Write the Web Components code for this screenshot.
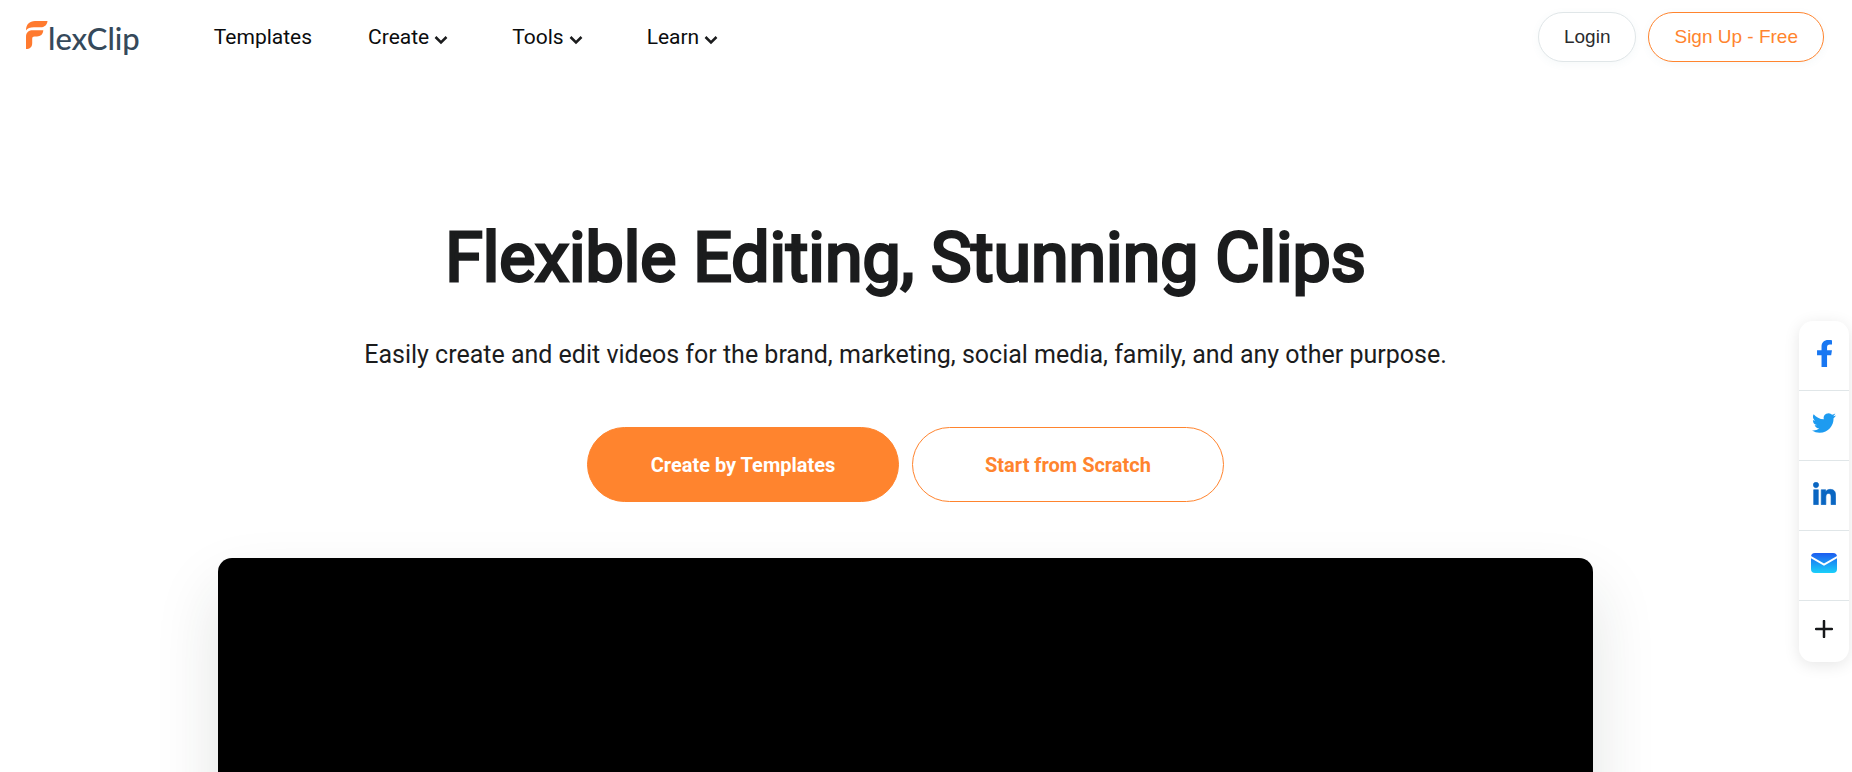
<!DOCTYPE html>
<html lang="en">
<head>
<meta charset="utf-8">
<meta name="viewport" content="width=device-width, initial-scale=1">
<title>FlexClip</title>
<style>
html { scrollbar-width: none; }
body { margin: 0; background: #fff; color: #1b1c1d; font-family: Roboto, "Liberation Sans", sans-serif; }
</style>
</head>
<body>
<flex-header></flex-header>
<flex-hero>
  <span slot="title">Flexible Editing, Stunning Clips</span>
  <span slot="lead">Easily create and edit videos for the brand, marketing, social media, family, and any other purpose.</span>
  <pill-button slot="actions" kind="primary">Create by Templates</pill-button>
  <pill-button slot="actions" kind="outline">Start from Scratch</pill-button>
</flex-hero>
<share-bar></share-bar>
<script>
const define = (name, html) => {
  const template = document.createElement('template');
  template.innerHTML = html;
  customElements.define(name, class extends HTMLElement {
    constructor() {
      super();
      this.attachShadow({ mode: 'open' }).append(template.content.cloneNode(true));
    }
  });
};

define('flex-logo', `
<style>
:host { display: block; }
a { display: flex; align-items: flex-start; text-decoration: none; color: #35495a; }
svg { display: block; width: 22px; height: 28px; margin-top: 5px; }
span { padding-top: 2px; font: 500 31px/40px Lato, sans-serif; }
</style>
<a href="#" aria-label="FlexClip home">
  <svg viewBox="0 0 22 28"><path fill="#ff7a2f" d="M0 9.500C0 3.500 3.500 0 9 0H21.500C21 4 18.500 6.300 14.500 6.300H8C4 6.300 1.500 7 0 9.500ZM0 28V16C0 11 3 9.300 7 9.300H17.300C17 13.500 14.500 15.500 11 15.500H8.500C6.800 15.500 6.200 16.300 6.200 18V22C6.200 26 4 28 0 28Z"/></svg>
  <span>lexClip</span>
</a>`);

define('nav-item', `
<style>
:host { display: block; }
:host([menu]) { padding-right: 8px; }
a, button { display: flex; align-items: center; gap: 5px; padding: 0; border: 0; background: none; color: #0b0c0d; font: 400 21px/28px Roboto, sans-serif; text-decoration: none; cursor: pointer; }
svg { width: 14px; height: 10px; margin-top: 5px; }
:host([menu]) a, :host(:not([menu])) button { display: none; }
</style>
<a href="#"><slot name="link"></slot></a>
<button type="button" aria-haspopup="true"><slot></slot><svg viewBox="0 0 14 10" fill="none" stroke="#1b1c1d" stroke-width="2.500"><path d="M1.500 2L7 7.500L12.500 2"/></svg></button>`);

define('account-button', `
<style>
:host { display: block; }
button { height: 50px; padding: 0 25px; border: 1px solid #e0e6e8; border-radius: 25px; background: #fff; color: #2a2b2e; font: 400 19px/24px "Liberation Sans", Arial, sans-serif; box-shadow: 0 2px 8px rgba(80,140,160,.06); cursor: pointer; }
:host([accent]) button { border-color: #ff842e; color: #ff842e; }
</style>
<button type="button"><slot></slot></button>`);

define('flex-header', `
<style>
:host { display: block; }
header { display: flex; align-items: center; height: 74px; padding: 0 28px 0 26px; box-sizing: border-box; }
nav { display: flex; align-items: center; gap: 56px; margin-left: 74px; }
.account { display: flex; gap: 12px; margin-left: auto; }
</style>
<header>
  <flex-logo></flex-logo>
  <nav aria-label="Main">
    <nav-item><span slot="link">Templates</span></nav-item>
    <nav-item menu>Create</nav-item>
    <nav-item menu>Tools</nav-item>
    <nav-item menu>Learn</nav-item>
  </nav>
  <div class="account">
    <account-button>Login</account-button>
    <account-button accent>Sign Up - Free</account-button>
  </div>
</header>`);

define('pill-button', `
<style>
:host { display: block; flex: 0 1 312px; }
button { width: 100%; height: 75px; border: 1px solid #ff842e; border-radius: 38px; background: #fff; color: #ff842e; font: 700 20px/28px Roboto, sans-serif; cursor: pointer; }
:host([kind="primary"]) button { background: #ff842e; color: #fff; }
</style>
<button type="button"><slot></slot></button>`);

define('flex-hero', `
<style>
:host { display: block; }
main { padding: 142px 41px 0 0; text-align: center; }
h1 { margin: 0; font: 400 68px/84px Roboto, sans-serif; -webkit-text-stroke: 3px #1b1c1d; color: #1b1c1d; }
p { margin: 35px 0 0; font: 400 25px/40px Roboto, sans-serif; }
.actions { display: flex; justify-content: center; gap: 13px; margin-top: 52px; }
.video { width: 76%; max-width: 1375px; margin: 56px auto 0; aspect-ratio: 16 / 9; border-radius: 14px; background: #000; box-shadow: 0 32px 64px rgba(30,45,42,.13); }
</style>
<main>
  <h1><slot name="title"></slot></h1>
  <p><slot name="lead"></slot></p>
  <div class="actions"><slot name="actions"></slot></div>
  <div class="video"></div>
</main>`);

define('share-link', `
<style>
:host { display: block; border-bottom: 1px solid #e0e6e8; }
:host(:last-of-type) { border-bottom: 0; }
a { display: flex; align-items: center; justify-content: center; height: 69px; padding-bottom: 5px; box-sizing: border-box; color: #17181a; }
:host(:last-of-type) a { height: 61px; }
</style>
<a href="#"><slot></slot></a>`);

define('share-bar', `
<style>
:host { position: fixed; right: 3px; top: 321px; width: 50px; border-radius: 14px; background: #fff; box-shadow: 0 3px 16px rgba(0,0,0,.1); }
svg { display: block; }
</style>
<share-link><svg width="15" height="27" viewBox="22 0 272 512" preserveAspectRatio="none" role="img" aria-label="Facebook"><path fill="#1877f2" d="M279.140 288l14.220-92.660h-88.910v-60.130c0-25.350 12.420-50.060 52.240-50.060h40.420V6.260S260.430 0 225.360 0c-73.220 0-121.080 44.380-121.080 124.720v70.620H22.890V288h81.390v224h100.170V288z"/></svg></share-link>
<share-link><svg width="24" height="24" viewBox="0 0 24 24" role="img" aria-label="Twitter"><path fill="#1d9bf0" d="M23.950 4.570a10 10 0 0 1-2.820.77 4.960 4.960 0 0 0 2.160-2.720c-.95.550-2 .960-3.130 1.180a4.920 4.920 0 0 0-8.380 4.480C7.690 8.100 4.070 6.130 1.640 3.160a4.820 4.820 0 0 0-.670 2.480c0 1.710.870 3.210 2.190 4.100a4.900 4.900 0 0 1-2.230-.62v.06a4.920 4.920 0 0 0 3.950 4.830 5 5 0 0 1-2.210.08 4.940 4.940 0 0 0 4.600 3.420A9.870 9.870 0 0 1 0 19.540a13.990 13.990 0 0 0 7.550 2.210c9.050 0 14-7.500 14-13.980 0-.21 0-.42-.02-.63a9.940 9.940 0 0 0 2.460-2.550z"/></svg></share-link>
<share-link><svg width="23" height="23" viewBox="-6 -6 460 460" role="img" aria-label="LinkedIn"><path fill="#0a66c2" stroke="#0a66c2" stroke-width="12" d="M100.280 448H7.400V148.900h92.880zM53.790 108.100C24.090 108.100 0 83.500 0 53.800a53.790 53.790 0 0 1 107.580 0c0 29.700-24.100 54.300-53.790 54.300zM447.900 448h-92.680V302.400c0-34.700-.7-79.200-48.290-79.200-48.290 0-55.690 37.700-55.690 76.700V448h-92.780V148.900h89.080v40.800h1.300c12.400-23.500 42.690-48.300 87.880-48.300 94 0 111.280 61.900 111.280 142.300V448z"/></svg></share-link>
<share-link><svg width="26" height="20" viewBox="0 0 26 20" role="img" aria-label="Email"><defs><linearGradient id="g" x1="0" y1="0" x2="0" y2="1"><stop stop-color="#1d5cf0"/><stop offset="1" stop-color="#1ad0fa"/></linearGradient></defs><rect width="26" height="20" rx="4" fill="url(#g)"/><path d="M-1 3.500L13 11.500L27 3.500" fill="none" stroke="#fff" stroke-width="2"/></svg></share-link>
<share-link><svg width="18" height="18" viewBox="0 0 18 18" role="img" aria-label="More"><path d="M9 1V17M1 9H17" fill="none" stroke="currentColor" stroke-width="2.500" stroke-linecap="round"/></svg></share-link>`);
</script>
</body>
</html>
